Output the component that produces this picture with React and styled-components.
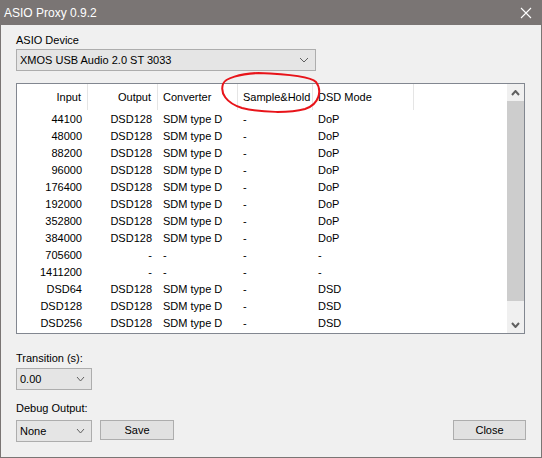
import React from 'react';
import styled, { createGlobalStyle } from 'styled-components';

const GlobalStyle = createGlobalStyle`
  body {
    margin: 0;
    background: #f0f0f0;
  }
`;

const Window = styled.div`
  position: relative;
  width: 542px;
  height: 458px;
  box-sizing: border-box;
  border: 1px solid #7a7574;
  border-top: none;
  background: #f0f0f0;
  display: flex;
  flex-direction: column;
  font-family: "Liberation Sans", Arial, sans-serif;
  font-size: 11px;
  color: #000;
`;

const TitleBar = styled.div`
  height: 25px;
  flex: none;
  background: #7a7574;
  color: #fff;
  font-size: 12px;
  display: flex;
  align-items: center;
  justify-content: space-between;
  padding: 0 9px 0 3px;
`;

const Body = styled.div`
  display: flex;
  flex-direction: column;
  align-items: flex-start;
  padding: 9px 15px 0 15px;
`;

const Label = styled.div`
  line-height: 13px;
  margin-top: ${({ gap }) => gap || 0}px;
`;

const Combo = styled.div`
  box-sizing: border-box;
  width: ${({ width }) => width}px;
  height: 22px;
  margin-top: ${({ gap }) => gap || 0}px;
  background: #e5e5e5;
  border: 1px solid #adadad;
  display: flex;
  align-items: center;
  justify-content: space-between;
  padding: 0 6px 0 3px;
`;

const ListView = styled.div`
  box-sizing: border-box;
  width: 509px;
  height: 251px;
  margin-top: 12px;
  border: 1px solid #828790;
  background: #fff;
  display: flex;
`;

const Table = styled.div`
  flex: 1;
  display: grid;
  grid-template-columns: 71px 70px 80px 75px 101px 1fr;
  grid-template-rows: 26px;
  grid-auto-rows: 17px;
  align-content: start;
`;

const HeaderCell = styled.div`
  display: flex;
  align-items: center;
  justify-content: ${({ right }) => (right ? 'flex-end' : 'flex-start')};
  padding: ${({ right }) => (right ? '0 6px 0 0' : '0 0 0 5px')};
  border-right: ${({ last }) => (last ? 'none' : '1px solid #e5e5e5')};
  box-sizing: border-box;
`;

const Cell = styled.div`
  display: flex;
  align-items: center;
  justify-content: ${({ right }) => (right ? 'flex-end' : 'flex-start')};
  padding: ${({ right }) => (right ? '0 6px 0 0' : '0 0 0 5px')};
  white-space: nowrap;
`;

const ScrollBar = styled.div`
  width: 17px;
  flex: none;
  background: #f0f0f0;
  display: flex;
  flex-direction: column;
`;

const ScrollArrow = styled.div`
  height: 17px;
  flex: none;
  display: flex;
  align-items: center;
  justify-content: center;
`;

const Thumb = styled.div`
  height: 200px;
  flex: none;
  background: #cdcdcd;
`;

const Track = styled.div`
  flex: 1;
`;

const ButtonRow = styled.div`
  align-self: stretch;
  display: flex;
  align-items: flex-start;
  margin-top: 5px;
`;

const Button = styled.div`
  box-sizing: border-box;
  width: ${({ width }) => width}px;
  height: 20px;
  margin-left: ${({ gap }) => gap || 0}px;
  background: #e1e1e1;
  border: 1px solid #adadad;
  display: flex;
  align-items: center;
  justify-content: center;
`;

const Spacer = styled.div`
  flex: 1;
`;

const Annotation = styled.svg`
  position: absolute;
  left: -1px;
  top: 0;
  pointer-events: none;
`;

const Chevron = ({ up, bold, w = 8, h = 4 }) => (
  <svg width={w + 2} height={h + 2} viewBox={`-1 -1 ${w + 2} ${h + 2}`}>
    <polyline
      points={up ? `0,${h} ${w / 2},0 ${w},${h}` : `0,0 ${w / 2},${h} ${w},0`}
      fill="none"
      stroke="#606060"
      strokeWidth={bold ? 2 : 1}
    />
  </svg>
);

const columns = [
  { title: 'Input', right: true },
  { title: 'Output', right: true },
  { title: 'Converter' },
  { title: 'Sample&Hold' },
  { title: 'DSD Mode' },
];

const pcm = (rate) => [rate, 'DSD128', 'SDM type D', '-', 'DoP'];
const dsd = (rate) => [rate, 'DSD128', 'SDM type D', '-', 'DSD'];

const rows = [
  pcm('44100'),
  pcm('48000'),
  pcm('88200'),
  pcm('96000'),
  pcm('176400'),
  pcm('192000'),
  pcm('352800'),
  pcm('384000'),
  ['705600', '-', '-', '-', '-'],
  ['1411200', '-', '-', '-', '-'],
  dsd('DSD64'),
  dsd('DSD128'),
  dsd('DSD256'),
];

export default function App() {
  return (
    <>
      <GlobalStyle />
      <Window>
        <TitleBar>
          <span>ASIO Proxy 0.9.2</span>
          <svg width="12" height="12" viewBox="0 0 12 12">
            <path d="M1 1 L11 11 M11 1 L1 11" stroke="#fff" strokeWidth="1.1" />
          </svg>
        </TitleBar>
        <Body>
          <Label>ASIO Device</Label>
          <Combo width={300} gap={2}>
            <span>XMOS USB Audio 2.0 ST 3033</span>
            <Chevron />
          </Combo>
          <ListView>
            <Table>
              {columns.map((c) => (
                <HeaderCell key={c.title} right={c.right}>
                  {c.title}
                </HeaderCell>
              ))}
              <HeaderCell last />
              {rows.map((r, i) => (
                <React.Fragment key={i}>
                  {r.map((v, j) => (
                    <Cell key={j} right={columns[j].right}>
                      {v}
                    </Cell>
                  ))}
                  <Cell />
                </React.Fragment>
              ))}
            </Table>
            <ScrollBar>
              <ScrollArrow>
                <Chevron up bold w={7} h={4} />
              </ScrollArrow>
              <Thumb />
              <Track />
              <ScrollArrow>
                <Chevron bold w={7} h={4} />
              </ScrollArrow>
            </ScrollBar>
          </ListView>
          <Label gap={18}>Transition (s):</Label>
          <Combo width={76} gap={3}>
            <span>0.00</span>
            <Chevron w={7} h={4} />
          </Combo>
          <Label gap={12}>Debug Output:</Label>
          <ButtonRow>
            <Combo width={76}>
              <span>None</span>
              <Chevron w={7} h={4} />
            </Combo>
            <Button width={74} gap={8}>Save</Button>
            <Spacer />
            <Button width={73}>Close</Button>
          </ButtonRow>
        </Body>
        <Annotation width="542" height="458" viewBox="0 0 542 458">
          <path
            d="M258 73 C285 74 310 76 316 82 C322 90 320 104 305 109 C290 113 262 113 242 108 C226 103 220 93 223 84 C225 78 240 74 258 73"
            fill="none"
            stroke="#e8141a"
            strokeWidth="2"
          />
        </Annotation>
      </Window>
    </>
  );
}
